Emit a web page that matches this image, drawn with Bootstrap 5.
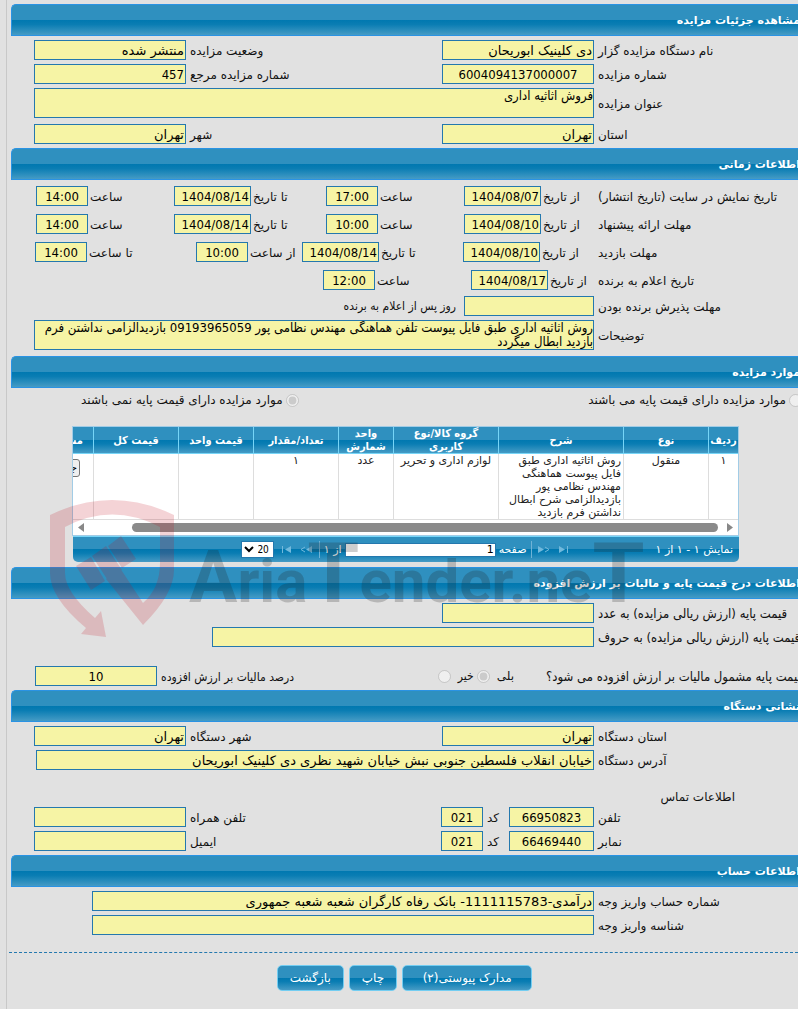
<!DOCTYPE html>
<html lang="fa" dir="rtl">
<head>
<meta charset="utf-8">
<meta name="viewport" content="width=device-width, initial-scale=1">
<title>مشاهده جزئیات مزایده</title>
<link href="https://cdn.jsdelivr.net/npm/bootstrap@5.3.0/dist/css/bootstrap.min.css" rel="stylesheet">
<style>
:root { --glass: linear-gradient(#2f90bf 0, #2f90bf 50%, #0078b0 50%, #0a7db3 65%, #459bc5 100%); }
html, body { overflow-x: hidden; }
body { background: #e1e1e1; color: #111; font: 12px/16px "DejaVu Sans", sans-serif; }
.page-frame { margin-left: 6px; border-left: 1px solid #c8c8c8; padding: 4px 0 18px 4px; }
.bar-title { height: 32px; margin: 0 0 4px; padding: 8px 0 0; border: 1px solid #2a93e4; border-right: 0; border-radius: 5px 0 0 0; background: var(--glass); color: #fff; font-size: 11px; font-weight: 700; line-height: 16px; white-space: nowrap; }
.bar-title span { display: block; margin-right: -2px; }
.line { display: flex; align-items: center; margin-bottom: 4px; padding-left: 23px; }
.line-time { margin-bottom: 8px; }
.cap { display: flex; justify-content: flex-end; flex: none; white-space: nowrap; padding: 1px 0 0 4px; }
.cap-main { width: 204px; }
.cap-tight { padding-left: 2px; }
.cap-grow { flex: 1 1 0; }
.cap-long, .cap-snug { font-family: "DejaVu Sans Condensed", "DejaVu Sans", sans-serif; }
.cap-long { font-size: 13px; }
.fld { display: block; flex: none; height: 20px; padding: 0 1px; border: 1px solid #2478ae; border-radius: 0; background: #f6f4a5; color: #000; font-size: 13px; line-height: 18px; outline: 0; }
.fld-num { font-family: "DejaVu Sans Condensed", "DejaVu Sans", sans-serif; }
.fld-fill { flex: 1 1 0; min-width: 0; }
textarea.fld { height: 30px; padding: 0; font-family: "DejaVu Sans Condensed", "DejaVu Sans", sans-serif; line-height: 14px; resize: none; overflow: hidden; }
.w-date { width: 77px; } .w-time { width: 52px; } .w-std { width: 152px; }
input[type=radio] { width: 13px; height: 13px; margin: 0 3px; }
.radio-start { margin-right: -7px; }
.items-grid { margin: 0 59px 5px 61px; }
.grid-view { border: 1px solid #a2cce6; background: #fff; overflow: hidden; }
.grid-view table { table-layout: fixed; width: 750px; border-collapse: separate; border-spacing: 0; font-size: 11px; line-height: 13px; color: #222; }
.grid-view th { height: 27px; padding: 0; text-align: center; vertical-align: middle; color: #fff; background: var(--glass); border-left: 1px solid #77d5f7; border-bottom: 1px solid #77d5f7; font-family: "DejaVu Sans Condensed", "DejaVu Sans", sans-serif; }
.grid-view td { height: 66px; padding: 0 2px; text-align: center; vertical-align: top; border-left: 1px solid #ddd; border-bottom: 1px solid #ddd; white-space: nowrap; }
.grid-view .at-start { text-align: right; }
.grid-view th.at-start { padding-right: 10px; }
.mini-btn { display: block; margin: 5px 11px 0 0; padding: 0 2px; height: 18px; border: 1px solid #767676; border-radius: 3px; background: #efefef; color: #000; font-size: 11px; line-height: 14px; }
.hbar { display: flex; align-items: center; justify-content: space-between; height: 15px; padding: 0 5px; color: #888; }
.hbar-thumb { flex: 1 1 0; height: 9px; margin: 0 9px 0 48px; border-radius: 5px; background: #8a8a8a; }
.pager { display: flex; align-items: center; height: 26px; margin-left: 1px; border-top: 1px solid #77d5f7; border-radius: 0 0 5px 5px; background: var(--glass); color: #fff; font-size: 11px; padding-right: 6px; white-space: nowrap; }
.pager input { width: 151px; height: 14px; border: 1px solid #2478ae; padding: 0 1px; font-size: 11px; border-radius: 0; margin: 0 3px; }
.pager select { width: 33px; height: 17px; border: 1px solid #2478ae; padding: 0; font: 10px "DejaVu Sans Condensed", sans-serif; background: #fff; color: #000; }
.pager button { padding: 0; border: 0; background: none; line-height: 0; color: #72b9dc; }
.pager i { width: 1px; height: 17px; background: #6fb3d6; }
.btn-glass { height: 26px; padding: 0 12px; border: 1px solid #73cdf1; border-radius: 5px; background: var(--glass); color: #fff; font-size: 12px; line-height: 22px; }
.btn-glass:hover { color: #fff; }
.foot-rule { border-top: 1px dashed #2478ae; margin: 17px 0 12px -2px; }
.wm { position: absolute; left: -24px; top: 72px; pointer-events: none; }
</style>
</head>
<body>
<main class="page-frame">
 <section>
  <h2 class="bar-title"><span>مشاهده جزئیات مزایده</span></h2>
  <div class="line"><label class="cap cap-main" for="org">نام دستگاه مزایده گزار</label><input id="org" class="fld w-std" value="دی کلینیک ابوریحان" readonly><label class="cap cap-grow" for="state">وضعیت مزایده</label><input id="state" class="fld w-std" value="منتشر شده" readonly></div>
  <div class="line"><label class="cap cap-main" for="num">شماره مزایده</label><input id="num" class="fld fld-num w-std text-center" value="6004094137000007" readonly><label class="cap cap-grow" for="ref">شماره مزایده مرجع</label><input id="ref" class="fld fld-num w-std" value="457" readonly></div>
  <div class="line" style="margin-bottom:6px"><label class="cap cap-main" for="ttl">عنوان مزایده</label><textarea id="ttl" class="fld fld-fill" readonly>فروش اثاثیه اداری</textarea></div>
  <div class="line"><label class="cap cap-main" for="prov">استان</label><input id="prov" class="fld w-std" value="تهران" readonly><label class="cap cap-grow" for="city">شهر</label><input id="city" class="fld w-std" value="تهران" readonly></div>
 </section>
 <section>
  <h2 class="bar-title" style="margin-bottom:6px"><span>اطلاعات زمانی</span></h2>
  <div class="line line-time" style="padding-left:25px"><span class="cap cap-main">تاریخ نمایش در سایت (تاریخ انتشار)</span><label class="cap cap-tight" style="width:53px" for="a1">از تاریخ</label><input id="a1" class="fld fld-num w-date" value="1404/08/07" readonly><label class="cap cap-tight" style="width:86px" for="a2">ساعت</label><input id="a2" class="fld fld-num w-time text-center" value="17:00" readonly><label class="cap cap-tight" style="width:75px" for="a3">تا تاریخ</label><input id="a3" class="fld fld-num w-date" value="1404/08/14" readonly><label class="cap cap-tight cap-grow" for="a4">ساعت</label><input id="a4" class="fld fld-num w-time text-center" value="14:00" readonly></div>
  <div class="line line-time" style="padding-left:25px"><span class="cap cap-main">مهلت ارائه پیشنهاد</span><label class="cap cap-tight" style="width:53px" for="b1">از تاریخ</label><input id="b1" class="fld fld-num w-date" value="1404/08/10" readonly><label class="cap cap-tight" style="width:86px" for="b2">ساعت</label><input id="b2" class="fld fld-num w-time text-center" value="10:00" readonly><label class="cap cap-tight" style="width:75px" for="b3">تا تاریخ</label><input id="b3" class="fld fld-num w-date" value="1404/08/14" readonly><label class="cap cap-tight cap-grow" for="b4">ساعت</label><input id="b4" class="fld fld-num w-time text-center" value="14:00" readonly></div>
  <div class="line line-time" style="padding-left:24px"><span class="cap cap-main">مهلت بازدید</span><label class="cap cap-tight" style="width:54px" for="c1">از تاریخ</label><input id="c1" class="fld fld-num w-date" value="1404/08/10" readonly><label class="cap cap-tight" style="width:84px" for="c2">تا تاریخ</label><input id="c2" class="fld fld-num w-date" value="1404/08/14" readonly><label class="cap cap-tight" style="width:54px" for="c3">از ساعت</label><input id="c3" class="fld fld-num w-time text-center" value="10:00" readonly><label class="cap cap-tight cap-grow" for="c4">تا ساعت</label><input id="c4" class="fld fld-num w-time text-center" value="14:00" readonly></div>
  <div class="line" style="margin-bottom:6px"><span class="cap cap-main">تاریخ اعلام به برنده</span><label class="cap cap-tight" style="width:46px" for="d1">از تاریخ</label><input id="d1" class="fld fld-num w-date" value="1404/08/17" readonly><label class="cap cap-tight" style="width:96px" for="d2">ساعت</label><input id="d2" class="fld fld-num w-time text-center" value="12:00" readonly></div>
  <div class="line"><label class="cap cap-main" for="e1">مهلت پذیرش برنده بودن</label><input id="e1" class="fld" style="width:130px" readonly><span class="cap-snug" style="margin-right:8px">روز پس از اعلام به برنده</span></div>
  <div class="line" style="margin-bottom:6px"><label class="cap cap-main" for="desc">توضیحات</label><textarea id="desc" class="fld fld-fill" readonly>روش اثاثیه اداری طبق فایل پیوست تلفن هماهنگی مهندس نظامی پور 09193965059 بازدیدالزامی نداشتن فرم بازدید ابطال میگردد</textarea></div>
 </section>
 <section>
  <h2 class="bar-title"><span>موارد مزایده</span></h2>
  <div class="d-flex align-items-center justify-content-between" style="height:16px;margin:0 0 18px 70px">
   <label class="d-flex align-items-center radio-start"><input type="radio" name="base" disabled>موارد مزایده دارای قیمت پایه می باشند</label>
   <label class="d-flex align-items-center"><input type="radio" name="base" checked disabled>موارد مزایده دارای قیمت پایه نمی باشند</label>
  </div>
 </section>
 <section class="items-grid position-relative">
  <div class="grid-view">
   <table>
    <colgroup><col style="width:30px"><col style="width:85px"><col style="width:125px"><col style="width:105px"><col style="width:55px"><col style="width:85px"><col style="width:75px"><col style="width:85px"><col></colgroup>
    <thead><tr><th>ردیف</th><th>نوع</th><th>شرح</th><th>گروه کالا/نوع<br>کاربری</th><th>واحد<br>شمارش</th><th>تعداد/مقدار</th><th>قیمت واحد</th><th>قیمت کل</th><th class="at-start">مشاهده</th></tr></thead>
    <tbody><tr><td>۱</td><td>منقول</td><td class="at-start">روش اثاثیه اداری طبق<br>فایل پیوست هماهنگی<br>مهندس نظامی پور<br>بازدیدالزامی شرح ابطال<br>نداشتن فرم بازدید</td><td>لوازم اداری و تحریر</td><td>عدد</td><td>۱</td><td></td><td></td><td><button type="button" class="mini-btn">جزئیات</button></td></tr></tbody>
   </table>
   <div class="hbar"><svg width="6" height="9"><path d="M0 0l6 4.500-6 4.500z" fill="currentColor"/></svg><div class="hbar-thumb"></div><svg width="6" height="9"><path d="M6 0L0 4.500l6 4.500z" fill="currentColor"/></svg></div>
  </div>
  <div class="pager">
   <span>نمایش ۱ - ۱ از ۱</span>
   <button type="button" aria-label="آخرین" style="margin-right:87px"><svg width="10" height="7"><path d="M0 0l6 3.500-6 3.500zM8 0h1v7h-1z" fill="currentColor"/></svg></button>
   <button type="button" aria-label="بعدی" style="margin-right:9px"><svg width="12" height="7"><path d="M0 0l6 3.500-6 3.500z" fill="currentColor"/><path d="M7 1l4 2.500-4 2.500" fill="none" stroke="currentColor"/></svg></button>
   <i style="margin:0 6px 0 4px"></i>
   <label for="pg">صفحه</label><input id="pg" value="1"><span>از ۱</span>
   <i style="margin:0 4px 0 7px"></i>
   <button type="button" aria-label="قبلی"><svg width="12" height="7"><path d="M12 0L6 3.500l6 3.500z" fill="currentColor"/><path d="M5 1L1 3.500l4 2.500" fill="none" stroke="currentColor"/></svg></button>
   <button type="button" aria-label="اولین" style="margin:0 9px 0 7px"><svg width="10" height="7"><path d="M10 0L4 3.500l6 3.500zM1 0h1v7H1z" fill="currentColor"/></svg></button>
   <select aria-label="تعداد در صفحه"><option>20</option></select>
  </div>
  <svg class="wm" width="610" height="142" viewBox="48 498 610 142" direction="ltr" aria-hidden="true">
   <path fill="#c00d1d" fill-opacity=".18" d="M50 515Q112 485 174 515V570Q174 594 143 625L106 579l14-11 23 35Q160 588 160 563V527Q112 502 65 527V573Q65 592 95 618l6-7 5 26-25-3 5-6Q50 598 50 573zM76 566l15-9 14 24-14 9zM92 556l14-10 16 24-15 9zM108 546l13-10 15 23-14 9z"/>
   <text x="189" y="602" fill="#222" fill-opacity=".22" font-family="Roboto, 'Liberation Sans', sans-serif" font-weight="700" font-size="60"><tspan font-size="72">A</tspan>ria<tspan font-size="84">T</tspan>ender.ne<tspan font-size="84">T</tspan></text>
  </svg>
 </section>
 <section>
  <h2 class="bar-title"><span>اطلاعات درج قیمت پایه و مالیات بر ارزش افزوده</span></h2>
  <div class="line"><label class="cap cap-main cap-long" for="p1">قیمت پایه (ارزش ریالی مزایده) به عدد</label><input id="p1" class="fld w-std" readonly></div>
  <div class="line" style="padding-left:201px"><label class="cap cap-main cap-long" for="p2">قیمت پایه (ارزش ریالی مزایده) به حروف</label><input id="p2" class="fld fld-fill" readonly></div>
  <div class="line" style="margin-top:19px;padding-left:24px"><span class="cap cap-long" style="width:256px">قیمت پایه مشمول مالیات بر ارزش افزوده می شود؟</span>
   <label class="d-flex align-items-center gap-1" style="margin-right:28px">بلی<input type="radio" name="vat" checked disabled></label>
   <label class="d-flex align-items-center gap-1 cap-snug">خیر<input type="radio" name="vat" disabled></label>
   <label class="cap cap-grow cap-snug" for="vp">درصد مالیات بر ارزش افزوده</label><input id="vp" class="fld fld-num text-center" style="width:122px" value="10" readonly></div>
 </section>
 <section>
  <h2 class="bar-title"><span>نشانی دستگاه</span></h2>
  <div class="line"><label class="cap cap-main" for="q1">استان دستگاه</label><input id="q1" class="fld w-std" value="تهران" readonly><label class="cap cap-grow" for="q2">شهر دستگاه</label><input id="q2" class="fld w-std" value="تهران" readonly></div>
  <div class="line" style="padding-left:25px"><label class="cap cap-main" for="q3">آدرس دستگاه</label><input id="q3" class="fld fld-fill" value="خیابان انقلاب فلسطین جنوبی نبش خیابان شهید نظری دی کلینیک ابوریحان" readonly></div>
  <p style="margin:19px 63px 2px 0">اطلاعات تماس</p>
  <div class="line"><label class="cap cap-main" for="r1">تلفن</label><input id="r1" class="fld fld-num text-center" style="width:85px" value="66950823" readonly><label class="cap" style="width:26px" for="r2">کد</label><input id="r2" class="fld fld-num text-center" style="width:42px" value="021" readonly><label class="cap cap-grow" for="r3">تلفن همراه</label><input id="r3" class="fld w-std" readonly></div>
  <div class="line"><label class="cap cap-main" for="s1">نمابر</label><input id="s1" class="fld fld-num text-center" style="width:85px" value="66469440" readonly><label class="cap" style="width:26px" for="s2">کد</label><input id="s2" class="fld fld-num text-center" style="width:42px" value="021" readonly><label class="cap cap-grow" for="s3">ایمیل</label><input id="s3" class="fld w-std" readonly></div>
 </section>
 <section>
  <h2 class="bar-title"><span>اطلاعات حساب</span></h2>
  <div class="line" style="padding-left:81px"><label class="cap cap-main" for="t1">شماره حساب واریز وجه</label><input id="t1" class="fld fld-fill" value="درآمدی-1111115783- بانک رفاه کارگران شعبه شعبه جمهوری" readonly></div>
  <div class="line" style="padding-left:81px"><label class="cap cap-main" for="t2">شناسه واریز وجه</label><input id="t2" class="fld fld-fill" readonly></div>
 </section>
 <div class="foot-rule"></div>
 <div class="d-flex justify-content-center" style="gap:5px">
  <button type="button" class="btn btn-glass" style="width:130px">مدارک پیوستی(۲)</button>
  <button type="button" class="btn btn-glass">چاپ</button>
  <button type="button" class="btn btn-glass">بازگشت</button>
 </div>
</main>
<script src="https://cdn.jsdelivr.net/npm/bootstrap@5.3.0/dist/js/bootstrap.bundle.min.js"></script>
</body>
</html>
